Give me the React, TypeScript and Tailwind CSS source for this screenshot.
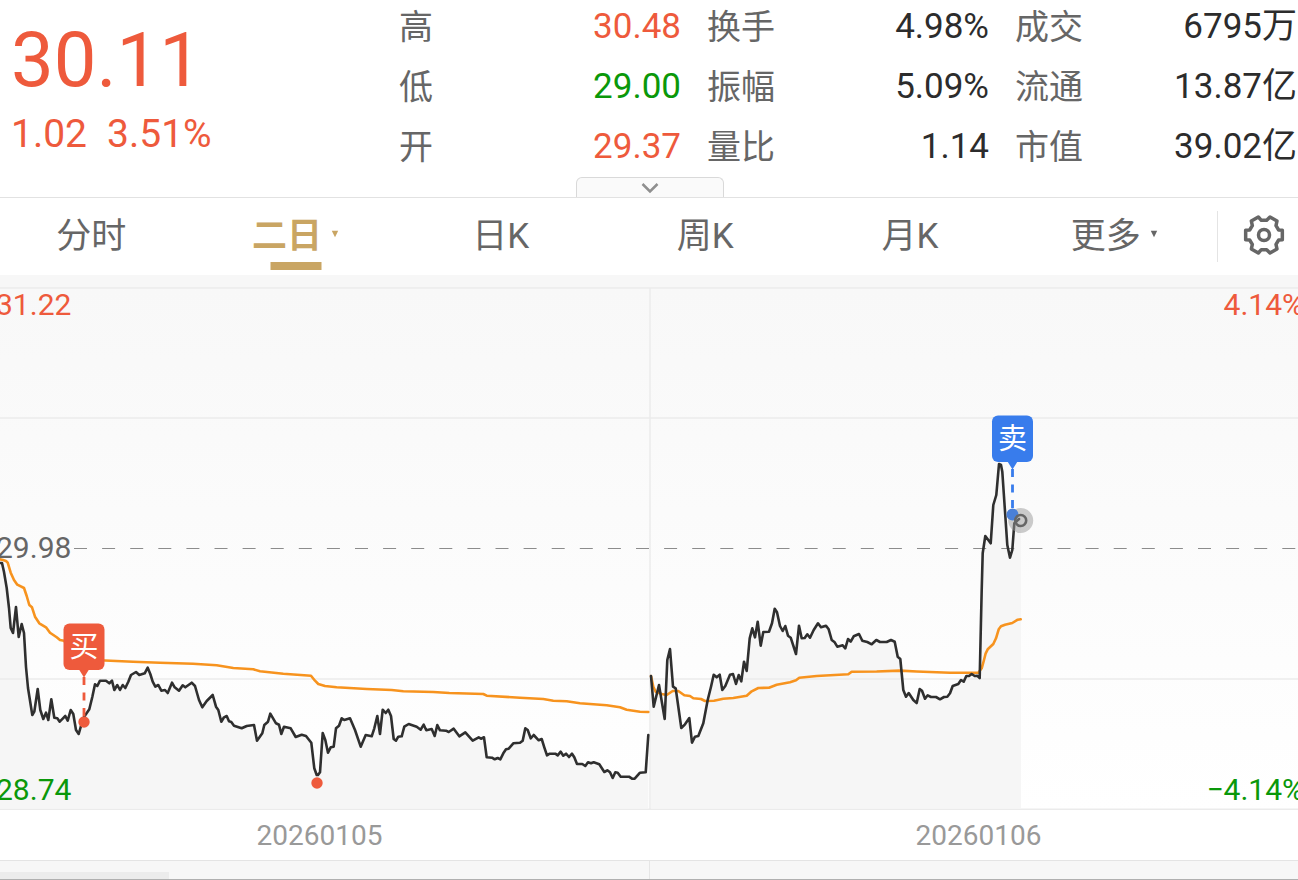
import React from "react";

type Stat = { label: string; value: string; tone: string };

const UP = "text-[#ee5a3c]";
const DOWN = "text-[#0a980a]";
const PLAIN = "text-[#2c2c2c]";

const statColumns: Stat[][] = [
  [
    { label: "高", value: "30.48", tone: UP },
    { label: "低", value: "29.00", tone: DOWN },
    { label: "开", value: "29.37", tone: UP },
  ],
  [
    { label: "换手", value: "4.98%", tone: PLAIN },
    { label: "振幅", value: "5.09%", tone: PLAIN },
    { label: "量比", value: "1.14", tone: PLAIN },
  ],
  [
    { label: "成交", value: "6795万", tone: PLAIN },
    { label: "流通", value: "13.87亿", tone: PLAIN },
    { label: "市值", value: "39.02亿", tone: PLAIN },
  ],
];

const tabs = [
  { label: "分时" },
  { label: "二日", active: true, arrow: true },
  { label: "日K" },
  { label: "周K" },
  { label: "月K" },
  { label: "更多", arrow: true },
];

const priceDay1 =
  "0,563 2,563 4,572 6.7,588 9,608 10.7,628 13,633 16,607 18.7,637 21.7,624 24,633 26,667 28,688 32.3,715 34.3,711.7 37.7,689 40.3,710 43.3,719 46,712.7 48.3,720 51.3,699.3 54.3,717.7 57.3,718.3 59.7,721.7 62.7,718.7 65.3,716 67.7,720.7 70.7,710 73.3,714 76,730 78.7,734 80.7,727 84,717 89.3,709.3 92.3,697 95,684.3 97.3,686 100,680.7 106,680.7 109.3,683.3 112,680.7 114.3,690 117.3,685 120,690 122.7,685 125.3,688 128.3,681.7 131,675 136,672 139.3,675 144.7,673.3 147.7,667.7 150.3,674 152.7,681.7 155.3,686.7 158.3,685 161.3,690.7 165,690 167.7,693 172,682.7 174.7,687.3 179,690.7 182.7,685.3 185.3,687.3 191.7,682.7 195,686 199,700 202.3,707.3 206.7,701 212.7,695 216,706.7 218.3,710 221.3,721.7 224,717.3 226.7,716 229,721.3 231.3,722 234,725.7 241.7,728.3 246.7,726 254,725 257,740.7 262.3,733.3 264.3,725 268,721.7 270.3,713.7 276,723.3 279,724.7 281.3,734 284,726.7 290.7,728.3 295.7,737 301.7,734.7 306,736 311.3,742.7 314.3,768.3 316.7,775 318,775 320,772.3 322.7,733 325.3,740 328,752.7 330.7,747.3 333.7,746.7 336,728.3 339,725.7 341.7,718.3 344.3,720 350,718.3 355,730 360.7,746.7 365.7,735 371.7,736.3 374.3,728.3 377.3,716 380,734 382.7,709.7 385.7,713 388.3,709.7 391,716 393.7,739 396,740.7 398.3,736.7 401.7,736.3 404.3,726.7 408.7,724 416.7,726.7 420.7,729.7 423.7,724.7 426.3,730.3 431.7,729 434.7,736 437.3,725 440,730.3 446,730.7 448.7,732 453.7,728.7 459.3,736.3 465.3,732.3 472.7,740.7 478.7,737.3 481,738.7 484,737.3 486.7,757.3 492,757.7 494.7,759.3 497.7,758 500.3,759.3 503.3,753.3 506,749.3 508.7,748.7 513.3,743.3 520,742.7 522.7,740.7 525.3,728.3 527.7,730 530.7,738.3 533.7,735 538.7,740.3 541.7,739 544.3,747.3 547,755.3 549.7,753.7 555.3,753.7 557.7,755.3 560.7,751.7 563.3,755.7 566,753.7 569,757 572,753.7 574.3,757.3 577,764 582.3,764 585.3,766 588,762.3 591,763.3 593.7,762.3 599.3,764.3 604.3,772 607.3,770.3 610,772.3 612.7,778 615.3,772.3 617.7,772.7 620.7,776.7 629,776.7 632,778.7 634.7,778.7 640,772.7 645.7,772.3 648.3,735";

const priceDay2 =
  "651,676 653.7,706.7 659,685 664.7,719 667.3,660 670,649 673,686.7 675.7,688.3 681.3,728 685,724.3 689.3,718 692,742.7 695,736.7 698.3,736 703.3,723.3 707.7,700 711,686.7 713.7,674.7 716.7,677.3 719.7,674.7 722.3,690 725.3,686 730,674.7 733,674 736,684 738.7,675 741.3,681.3 744,661.7 746.7,671 749.7,638.3 752.3,628.3 755,637.3 757.7,621.7 760.7,645.7 763.3,632 769,631.7 772,623.3 774.7,608.7 777,612.3 780,626 782.7,631 785.3,626 788,635.7 790.7,637.7 796,654 799,625.7 801.7,638.3 804.7,638 807.3,634.3 810,637.7 813.7,630 818,623.3 821,627.3 826,625.7 828.7,629.3 831.7,640 834.7,642.3 837.3,646.7 842.7,645.3 845.3,648.3 848,639 850.7,641.7 853.7,636.3 859,634 862.3,640.7 867.3,642 871.7,644.3 876.3,640 880,642 886.7,642 891,640 894.7,641.7 897.7,656.7 900.3,659 903.3,690 906,696.7 908.7,693 913.3,700 916.7,703 919.7,689 922,690.7 925,698.7 927.7,695.3 931,697 936,697 940,699.3 944,697 947.3,696.7 950,693.3 952.7,686 958.3,684 961,680 963.7,681.7 966.3,676 969,676 971.7,674 974.7,676 977.3,675.7 979.7,678 981,620 981.7,590 982.7,553.3 985.3,536 990.7,543.3 993.3,505 996.3,495 999,464 1001,465 1002.3,471.7 1007.3,545 1010,557.7 1012.3,550 1014.3,523.3 1019,519";

const averageDay1 =
  "0,559.3 3,560 6,561 7.7,562.7 10.7,572.7 14,580 17.3,584.7 24,588 26.7,596 29.3,605 32,607.3 35,616.7 39.3,623.3 46,627.3 50,632.7 56.7,637.3 60,640 64,640.7 76,656 90,660 105,660.5 133,661.7 160,662.7 193,663.7 216.7,665.3 233.3,668 253.3,669.3 260,671.3 283.3,673.7 311,675.7 315,680.7 318.3,684 325,686 336.7,687.3 366.7,689 391.7,690 403.3,691.3 433.3,692 449.3,693 483.3,694 486.7,695.7 520,697.7 543.3,699 553.3,700.7 566.7,701.3 580,703.3 606.7,705.3 620,707.3 626.7,709.7 640,711.7 648.3,712";

const averageDay2 =
  "651,676 653.3,686.7 655.7,691.7 661.7,694 666.7,695 672.7,691 678.3,691 684.3,695.3 690,696 693.3,698.3 701,699 705,701 714,700.7 723.3,698.7 733.3,698 746.7,695.7 751.7,691.3 758.3,688 769,687.7 776.7,684.7 790,682.3 796,680.3 799.3,677.7 816.7,676 848.3,674.3 851.7,671.7 876.7,671.5 900,670.6 916.7,671.5 950,672.7 978.3,672.7 981.7,668.3 984,660 985.7,653.3 987.7,649.3 993.3,644 996,638.3 998.7,629.3 1001,626.3 1005,624.7 1012.3,623 1017.7,619.7 1020.7,619.3";

function GearIcon() {
  return (
    <svg viewBox="0 0 144 150" className="h-[50px] w-12" fill="none" stroke="#666" strokeWidth="10.500" strokeLinejoin="round" aria-hidden="true">
      <path d="M55 21L64 31H80L90 21L111 33L108 47L116 60L127 61V89L116 90L108 103L111 117L90 129L80 119H64L55 129L34 117L37 103L29 90L17 89V61L29 60L37 47L34 33Z" />
      <circle cx="72" cy="75" r="16.500" />
    </svg>
  );
}

function Marker({ x, top, text, color }: { x: number; top: number; text: string; color: string }) {
  return (
    <g>
      <rect x={x - 20.5} y={top} width="41" height="46.500" rx="6" fill={color} />
      <path d={`M${x - 5} ${top + 46}h10l-5 8z`} fill={color} />
      <text x={x} y={top + 33} textAnchor="middle" fontSize="29" fill="#fff">
        {text}
      </text>
    </g>
  );
}

function PriceChart() {
  return (
    <svg viewBox="0 275 1298 535" className="block h-auto w-full" role="img" aria-label="二日走势">
      <defs>
        <linearGradient id="plot" x1="0" y1="0" x2="0" y2="1">
          <stop offset="0" stopColor="#f8f8f8" />
          <stop offset="1" stopColor="#fff" />
        </linearGradient>
      </defs>
      <rect x="0" y="275" width="1298" height="13" fill="#f7f7f7" />
      <rect x="0" y="288" width="1298" height="522" fill="url(#plot)" />
      <polygon points={`0,808 ${priceDay1} 648.3,808`} fill="#f6f6f6" />
      <polygon points={`651,808 ${priceDay2} 1021,519 1021,808`} fill="#f6f6f6" />
      <g stroke="#ebebeb" strokeWidth="1.500">
        <path d="M0 288H1298M0 418H1298M0 679H1298M0 809.250H1298M650 288V810" />
      </g>
      <path d="M74 548.500H1298" stroke="#8c8c8c" strokeWidth="1.200" strokeDasharray="13 15.100" />
      <g fill="none" strokeWidth="2.600" strokeLinejoin="round" strokeLinecap="round">
        <g stroke="#f7931e">
          <polyline points={averageDay1} />
          <polyline points={averageDay2} />
        </g>
        <g stroke="#2f2f2f">
          <polyline points={priceDay1} />
          <polyline points={priceDay2} />
        </g>
      </g>
      <path d="M84 677V722" stroke="#ee5a3c" strokeWidth="2.800" strokeDasharray="8 7.500" />
      <circle cx="84" cy="722" r="5.700" fill="#ee5a3c" />
      <circle cx="317" cy="783" r="5.700" fill="#ee5a3c" />
      <Marker x={84} top={623.5} text="买" color="#ee5a3c" />
      <path d="M1012.500 469V512" stroke="#387cec" strokeWidth="2.800" strokeDasharray="8 7.500" />
      <circle cx="1020.700" cy="520.500" r="12.500" fill="#999" fillOpacity=".5" />
      <circle cx="1012.500" cy="514.500" r="6" fill="#4a80d8" />
      <circle cx="1020.700" cy="520.500" r="5.500" fill="none" stroke="#666" strokeWidth="2.600" />
      <Marker x={1012.5} top={415.5} text="卖" color="#387cec" />
    </svg>
  );
}

export default function App() {
  return (
    <main className="w-full overflow-hidden bg-white font-[Roboto,'Noto_Sans_CJK_SC',sans-serif] text-[#666]">
      <header className="relative flex border-b border-[#e2e2e2] pb-5">
        <section className={`w-[399px] shrink-0 pl-[11px] pt-[18px] ${UP}`}>
          <p className="text-[76px] leading-[84px]">30.11</p>
          <p className="flex gap-5 pt-2 text-[39px] leading-[48px]">
            <span>1.02</span>
            <span>3.51%</span>
          </p>
        </section>
        <div className="grid flex-1 grid-cols-3 gap-x-[26px] pr-px">
          {statColumns.map((column) => (
            <dl key={column[0].label} className="-mt-[3px]">
              {column.map((stat) => (
                <div key={stat.label} className="flex h-[60px] items-center justify-between whitespace-nowrap">
                  <dt className="text-[34px]">{stat.label}</dt>
                  <dd className={`text-[35px] ${stat.tone}`}>{stat.value}</dd>
                </div>
              ))}
            </dl>
          ))}
        </div>
        <button
          type="button"
          aria-label="展开"
          className="absolute bottom-0 left-1/2 ml-px flex h-5 w-[148px] -translate-x-1/2 items-center justify-center rounded-t-md border border-b-0 border-[#d9d9d9] bg-[#fafafa]"
        >
          <svg viewBox="0 0 18 12" className="h-3 w-[18px]" fill="none" stroke="#8f8f8f" strokeWidth="2.500" aria-hidden="true">
            <path d="M1.500 2L9 9.500L16.500 2" />
          </svg>
        </button>
      </header>

      <nav className="flex h-[77px] items-center">
        <div className="-ml-[11px] flex flex-1">
          {tabs.map((tab) => (
            <button
              key={tab.label}
              type="button"
              className={`relative flex h-[77px] flex-1 items-center justify-center gap-2 pt-px text-[35px] ${tab.active ? "font-bold text-[#c9a563]" : ""}`}
            >
              {tab.label}
              {tab.arrow && (
                <svg viewBox="0 0 10 14" className="h-3.5 w-2.5 pb-1" fill="currentColor" aria-hidden="true">
                  <path d="M.5 1h9L5 10z" />
                </svg>
              )}
              {tab.active && <span className="absolute bottom-[5px] left-1/2 h-2 w-[51px] -translate-x-1/2 bg-[#c9a563]" />}
            </button>
          ))}
        </div>
        <button type="button" aria-label="设置" className="flex h-[51px] w-[81px] items-center justify-center border-l border-[#e4e4e4] pb-[3px] pl-3">
          <GearIcon />
        </button>
      </nav>

      <section className="relative text-[30px] leading-9">
        <PriceChart />
        <span className={`absolute -left-1 top-3 ${UP}`}>31.22</span>
        <span className={`absolute -right-1.5 top-3 ${UP}`}>4.14%</span>
        <span className="absolute -left-1 top-[255px]">29.98</span>
        <span className={`absolute -left-1 bottom-0.5 ${DOWN}`}>28.74</span>
        <span className={`absolute -right-1.5 bottom-0.5 ${DOWN}`}>−4.14%</span>
      </section>

      <div className="grid h-[51px] grid-cols-2 items-center gap-x-5 border-b border-[#e4e4e4] pt-0.5 text-center text-[28px] text-[#999]">
        <time dateTime="2026-01-05">20260105</time>
        <time dateTime="2026-01-06">20260106</time>
      </div>

      <footer className="grid h-[19px] grid-cols-2 items-end border-b border-[#b0b0b0] bg-[#f7f7f7]">
        <div className="-mr-px flex h-full items-end border-r border-[#e6e6e6]">
          <div className="h-[7px] w-[26%] bg-[#ececec]" />
        </div>
      </footer>
    </main>
  );
}
